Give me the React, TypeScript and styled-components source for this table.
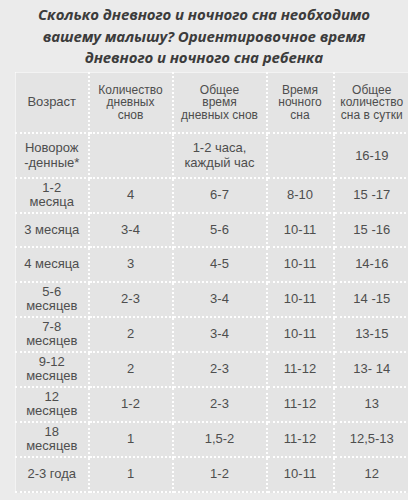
import React from "react";
import styled, { createGlobalStyle } from "styled-components";

const Global = createGlobalStyle`
  html, body {
    margin: 0;
    padding: 0;
    background: #ebebeb;
    overflow: hidden;
  }
  body {
    width: 408px;
    height: 500px;
  }
`;

const Page = styled.div`
  display: flex;
  flex-direction: column;
  width: 408px;
  height: 500px;
  background: #ebebeb;
`;

const Title = styled.h1`
  margin: 4px 0 0 0;
  height: 68px;
  font-family: "Open Sans", "Noto Sans", sans-serif;
  font-style: italic;
  font-weight: 700;
  font-size: 15px;
  line-height: 21.5px;
  color: #3c3c3c;
  text-align: center;
  letter-spacing: -0.1px;
`;

const Table = styled.table`
  margin-left: 15px;
  border-collapse: collapse;
  table-layout: fixed;
  width: 394px;
  background: #e4e4e4;
  font-family: "Liberation Sans", Arial, sans-serif;
  color: #4e4e4e;
  border: 1px solid rgba(255, 255, 255, 0.55);
`;

const Row = styled.tr<{ $h: number }>`
  height: ${(p) => p.$h}px;
`;

const Cell = styled.td<{ $size?: number; $lh?: number }>`
  padding: 0 2px;
  text-align: center;
  vertical-align: middle;
  font-size: ${(p) => p.$size ?? 13}px;
  line-height: ${(p) => p.$lh ?? 14}px;
  border: 2px dotted rgba(255, 255, 255, 0.95);
  &:first-child {
    border-left: none;
  }
  &:last-child {
    border-right: none;
  }
`;

const HeadRow = styled(Row)`
  td {
    border-top: none;
  }
`;

const widths = [73, 84, 94, 67, 76];

type R = { cells: string[][]; h: number };

const rows: R[] = [
  {
    h: 45,
    cells: [["Новорож", "-денные*"], [], ["1-2 часа,", "каждый час"], [], ["16-19"]],
  },
  { h: 35, cells: [["1-2", "месяца"], ["4"], ["6-7"], ["8-10"], ["15 -17"]] },
  { h: 34, cells: [["3 месяца"], ["3-4"], ["5-6"], ["10-11"], ["15 -16"]] },
  { h: 35, cells: [["4 месяца"], ["3"], ["4-5"], ["10-11"], ["14-16"]] },
  { h: 35, cells: [["5-6", "месяцев"], ["2-3"], ["3-4"], ["10-11"], ["14 -15"]] },
  { h: 35, cells: [["7-8", "месяцев"], ["2"], ["3-4"], ["10-11"], ["13-15"]] },
  { h: 35, cells: [["9-12", "месяцев"], ["2"], ["2-3"], ["11-12"], ["13- 14"]] },
  { h: 35, cells: [["12", "месяцев"], ["1-2"], ["2-3"], ["11-12"], ["13"]] },
  { h: 35, cells: [["18", "месяцев"], ["1"], ["1,5-2"], ["11-12"], ["12,5-13"]] },
  { h: 35, cells: [["2-3 года"], ["1"], ["1-2"], ["10-11"], ["12"]] },
];

const header: string[][] = [
  ["Возраст"],
  ["Количество", "дневных", "снов"],
  ["Общее", "время", "дневных снов"],
  ["Время", "ночного", "сна"],
  ["Общее", "количество", "сна в сутки"],
];

const Lines = ({ lines }: { lines: string[] }) => (
  <>
    {lines.map((l, i) => (
      <React.Fragment key={i}>
        {i > 0 && <br />}
        {l}
      </React.Fragment>
    ))}
  </>
);

export default function App() {
  return (
    <Page>
      <Global />
      <Title>
        Сколько дневного и ночного сна необходимо
        <br />
        вашему малышу? Ориентировочное время
        <br />
        дневного и ночного сна ребенка
      </Title>
      <Table>
        <colgroup>
          {widths.map((w, i) => (
            <col key={i} style={{ width: w }} />
          ))}
        </colgroup>
        <tbody>
          <HeadRow $h={60}>
            {header.map((c, i) => (
              <Cell key={i} $size={i === 0 ? 13 : 12} $lh={12.5}>
                <Lines lines={c} />
              </Cell>
            ))}
          </HeadRow>
          {rows.map((r, ri) => (
            <Row key={ri} $h={r.h}>
              {r.cells.map((c, ci) => (
                <Cell key={ci} $lh={ri === 0 ? 15 : 14}>
                  <Lines lines={c} />
                </Cell>
              ))}
            </Row>
          ))}
        </tbody>
      </Table>
    </Page>
  );
}
